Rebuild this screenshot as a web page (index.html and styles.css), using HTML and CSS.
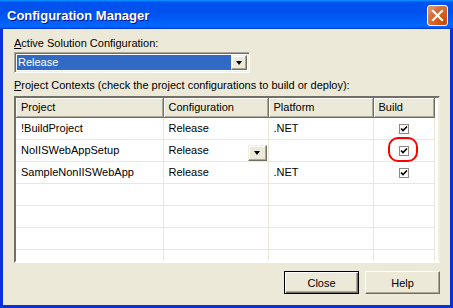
FILE: index.html
```html
<!DOCTYPE html>
<html lang="en">
<head>
  <meta charset="UTF-8">
  <title>Configuration Manager</title>
  <link rel="stylesheet" href="styles.css">
</head>
<body>
  <div class="window">
    <div class="title-bar">
      <span class="title-text">Configuration Manager</span>
      <button class="close-x" aria-label="Close">
        <svg width="13" height="13" viewBox="0 0 13 13">
          <path d="M2 2 L11 11 M11 2 L2 11" stroke="#fff" stroke-width="2.2" stroke-linecap="square"/>
        </svg>
      </button>
    </div>

    <div class="client">
      <div class="field-label"><u>A</u>ctive Solution Configuration:</div>
      <div class="combo">
        <div class="combo-value">Release</div>
        <div class="drop-btn"><span class="arrow"></span></div>
      </div>

      <div class="field-label contexts-label"><u>P</u>roject Contexts (check the project configurations to build or deploy):</div>

      <div class="grid-box">
        <table class="grid">
          <colgroup>
            <col class="col-project">
            <col class="col-config">
            <col class="col-platform">
            <col class="col-build">
          </colgroup>
          <thead>
            <tr>
              <th>Project</th>
              <th>Configuration</th>
              <th>Platform</th>
              <th>Build</th>
            </tr>
          </thead>
          <tbody>
            <tr>
              <td>!BuildProject</td>
              <td>Release</td>
              <td>.NET</td>
              <td class="build-cell"><span class="check"></span></td>
            </tr>
            <tr>
              <td>NoIISWebAppSetup</td>
              <td>
                <div class="cell-combo">
                  <span>Release</span>
                  <div class="drop-btn cell-drop"><span class="arrow"></span></div>
                </div>
              </td>
              <td></td>
              <td class="build-cell"><span class="check marked"><span class="ring"></span></span></td>
            </tr>
            <tr>
              <td>SampleNonIISWebApp</td>
              <td>Release</td>
              <td>.NET</td>
              <td class="build-cell"><span class="check"></span></td>
            </tr>
            <tr><td></td><td></td><td></td><td></td></tr>
            <tr><td></td><td></td><td></td><td></td></tr>
            <tr><td></td><td></td><td></td><td></td></tr>
            <tr><td></td><td></td><td></td><td></td></tr>
          </tbody>
        </table>
      </div>

      <div class="button-row">
        <button class="push-btn default-btn">Close</button>
        <button class="push-btn">Help</button>
      </div>
    </div>
  </div>
</body>
</html>
```

FILE: styles.css
```css
* {
  box-sizing: border-box;
  margin: 0;
  padding: 0;
}

body {
  font-family: 'Liberation Sans', Arial, sans-serif;
  font-size: 11px;
  color: #000000;
  background: #ffffff;
}

.window {
  width: 453px;
  height: 308px;
  display: flex;
  flex-direction: column;
}

/* title bar */
.title-bar {
  height: 29px;
  flex-shrink: 0;
  display: flex;
  align-items: center;
  justify-content: space-between;
  padding: 0 5px 0 7px;
  background: linear-gradient(180deg, #0997ff, #0053ee 8%, #0050ee 40%, #0066ff 88%, #0066ff 93%, #005bff 95%, #003dd7 96%, #003dd7);
}

.title-text {
  color: #ffffff;
  font-weight: bold;
  font-size: 13px;
  text-shadow: 1px 1px #0f1089;
  padding-top: 1px;
}

.close-x {
  width: 21px;
  height: 21px;
  border: 1px solid #ffffff;
  border-radius: 3px;
  background: radial-gradient(circle at 90% 90%, #cc4600 0%, #dc6527 55%, #cd7546 68%, #e08c64 80%);
  display: flex;
  align-items: center;
  justify-content: center;
  margin-top: 1px;
}

/* client area */
.client {
  flex: 1;
  display: flex;
  flex-direction: column;
  background: #ece9d8;
  border: 3px solid #0831d9;
  border-top: none;
  padding: 8px 10px 8px 11px;
}

.field-label {
  height: 13px;
  line-height: 13px;
  margin-bottom: 2px;
  white-space: nowrap;
}

.contexts-label {
  margin-top: 6px;
  margin-bottom: 4px;
}

/* combo box */
.combo {
  width: 236px;
  height: 21px;
  display: flex;
  padding: 2px;
  background: #ffffff;
  border: 1px solid;
  border-color: #aca899 #ffffff #ffffff #aca899;
  box-shadow: inset 1px 1px #716f64, inset -1px -1px #f1efe2;
}

.combo-value {
  flex: 1;
  background: #316ac5;
  color: #ffffff;
  line-height: 15px;
  padding-left: 1px;
}

.drop-btn {
  width: 16px;
  display: flex;
  align-items: center;
  justify-content: center;
  background: #ece9d8;
  border: 1px solid;
  border-color: #f1efe2 #716f64 #716f64 #f1efe2;
  box-shadow: inset -1px -1px #aca899, inset 1px 1px #ffffff;
}

.arrow {
  width: 0;
  height: 0;
  border-left: 3.5px solid transparent;
  border-right: 3.5px solid transparent;
  border-top: 4px solid #000000;
  margin-top: 1px;
}

/* project grid */
.grid-box {
  height: 167px;
  flex-shrink: 0;
  overflow: hidden;
  background: #ffffff;
  border: 2px solid;
  border-color: #716f64 #f1efe2 #ffffff #716f64;
}

.grid {
  border-collapse: collapse;
  table-layout: fixed;
  width: 418px;
}

.col-project { width: 147px; }
.col-config { width: 105px; }
.col-platform { width: 105px; }
.col-build { width: 61px; }

.grid th {
  height: 19px;
  font-weight: normal;
  text-align: left;
  padding: 0 5px;
  background: #ece9d8;
  border-right: 1px solid #716f64;
  border-bottom: 1px solid #716f64;
  box-shadow: inset 1px 1px #ffffff, inset -1px -1px #aca899;
}

.grid td {
  height: 22px;
  padding: 0 5px;
  white-space: nowrap;
  border-right: 1px solid #ebe8d7;
  border-bottom: 1px solid #ebe8d7;
}

.grid td.build-cell {
  text-align: center;
  padding: 0;
}

.cell-combo {
  height: 21px;
  display: flex;
  align-items: center;
  justify-content: space-between;
  margin-right: -4px;
}

.cell-drop {
  width: 19px;
  height: 16px;
  align-self: flex-end;
}

.check {
  position: relative;
  display: inline-block;
  width: 10px;
  height: 10px;
  vertical-align: middle;
  border: 1px solid #8c8a80;
  background: #ffffff url("data:image/svg+xml,%3Csvg xmlns='http://www.w3.org/2000/svg' width='8' height='8'%3E%3Cpath d='M1 3.5 L3 5.5 L7 1.5' fill='none' stroke='%23000' stroke-width='1.6'/%3E%3C/svg%3E") center / 8px 8px no-repeat;
}

.ring {
  position: absolute;
  left: -12px;
  top: -10px;
  width: 30px;
  height: 25px;
  border: 2px solid #ff0000;
  border-radius: 10px;
}

/* dialog buttons */
.button-row {
  display: flex;
  justify-content: flex-end;
  gap: 6px;
  margin-top: 8px;
}

.push-btn {
  width: 75px;
  height: 23px;
  font-family: inherit;
  font-size: 11px;
  background: #ece9d8;
  border: 1px solid;
  border-color: #ffffff #716f64 #716f64 #ffffff;
  box-shadow: inset -1px -1px #aca899;
}

.default-btn {
  border: 1px solid #000000;
  box-shadow: inset 1px 1px #ffffff, inset -1px -1px #716f64, inset -2px -2px #aca899;
}
```
